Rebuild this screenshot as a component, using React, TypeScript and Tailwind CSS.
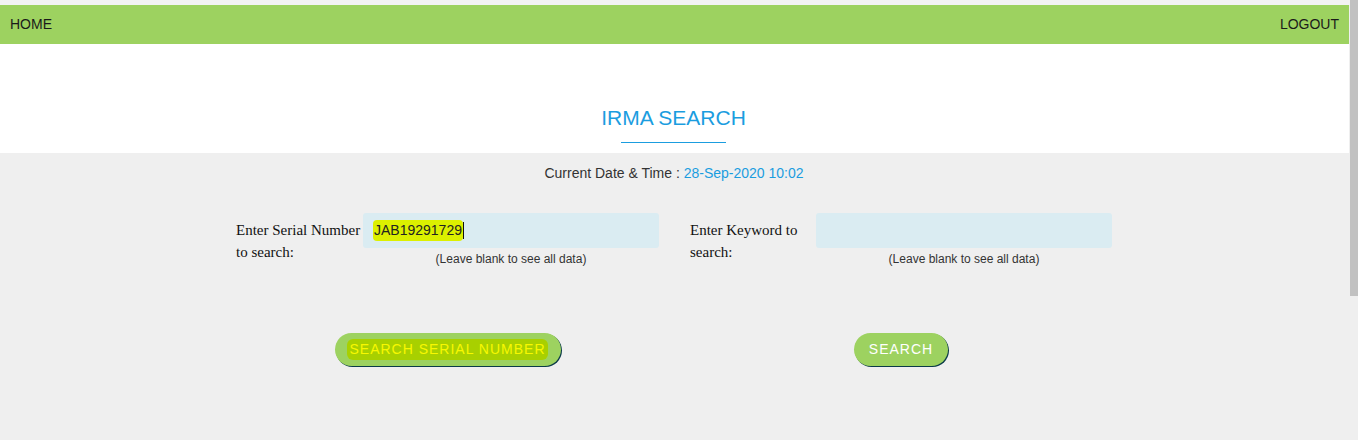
import React from 'react'

const arial = "font-['Liberation_Sans',Arial,sans-serif]"
const times = "font-['Liberation_Serif','Times_New_Roman',serif]"

function SearchField({ label, value, cols }: { label: React.ReactNode; value?: string; cols: string }) {
  return (
    <div className={`grid ${cols}`}>
      <label className={`${times} pt-[6px] text-[15px] leading-[22px] text-[#111]`}>{label}</label>
      <div>
        <div className={`${arial} flex h-[35px] items-center rounded-[3px] bg-[#daecf2] px-[10px] text-[14px] text-[#222]`}>
          {value ? (
            <span className="flex items-center">
              <span className="rounded-[4px] bg-[#dcf000] px-[1px]">{value}</span>
              <span className="h-[17px] w-px bg-[#111]" />
            </span>
          ) : null}
        </div>
        <p className={`${arial} mt-[4px] text-center text-[12px] leading-[14px] text-[#333]`}>(Leave blank to see all data)</p>
      </div>
    </div>
  )
}

function PillButton({ children, width }: { children: React.ReactNode; width: string }) {
  return (
    <button
      className={`${arial} ${width} flex h-[33px] items-center justify-center rounded-full bg-[#9dd260] text-[14px] tracking-[1px] text-white shadow-[1px_1px_0_#0b3b48]`}
    >
      {children}
    </button>
  )
}

export default function App() {
  return (
    <div className="flex h-[440px] w-[1358px] overflow-hidden bg-[#efefef]">
      <div className="flex w-[1350px] flex-col">
        <div className="h-[5px] bg-[#f3f3f3]" />
        <nav className={`${arial} mr-[1px] flex h-[39px] items-center justify-between bg-[#9dd260] px-[10px] text-[14px] text-[#1a1a1a]`}>
          <a>HOME</a>
          <a>LOGOUT</a>
        </nav>
        <header className="mr-[1px] flex h-[109px] flex-col items-center bg-white pr-[2px] pt-[62px]">
          <h1 className={`${arial} text-[21px] leading-[24px] text-[#1b9ddf]`}>IRMA SEARCH</h1>
          <div className="mt-[12px] h-px w-[105px] bg-[#1b9ddf]" />
        </header>
        <main className="flex flex-1 flex-col items-center bg-[#efefef] pr-[2px]">
          <p className={`${arial} mt-[12px] text-[14px] leading-[16px] text-[#333]`}>
            Current Date &amp; Time : <span className="text-[#1b9ddf]">28-Sep-2020 10:02</span>
          </p>
          <div className="mt-[32px] flex gap-[31px]">
            <SearchField cols="grid-cols-[127px_296px]" label={<>Enter Serial Number to search:</>} value="JAB19291729" />
            <SearchField cols="grid-cols-[126px_296px]" label={<>Enter Keyword to search:</>} />
          </div>
          <div className="mt-[67px] flex gap-[31px]">
            <div className="flex w-[423px] justify-center">
              <PillButton width="w-[226px]">
                <span className="rounded-[6px] bg-[#a8d000] px-[2px] text-[#f8f800]">SEARCH SERIAL NUMBER</span>
              </PillButton>
            </div>
            <div className="flex w-[422px] justify-center">
              <PillButton width="w-[94px]">SEARCH</PillButton>
            </div>
          </div>
        </main>
      </div>
      <div className="flex w-[8px] flex-col bg-[#efefef]">
        <div className="h-[296px] bg-[#c1c1c1]" />
      </div>
    </div>
  )
}
